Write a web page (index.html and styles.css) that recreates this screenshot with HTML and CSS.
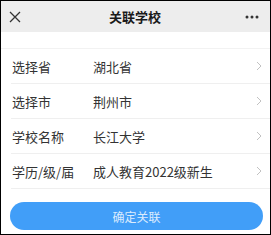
FILE: index.html
```html
<!DOCTYPE html>
<html lang="zh">
<head>
<meta charset="utf-8">
<link rel="stylesheet" href="styles.css">
</head>
<body>
<div class="page">
  <header class="nav">
    <svg class="nav-close" width="12" height="12" viewBox="0 0 12 12"><path d="M1 1L11 11M11 1L1 11" stroke="#333" stroke-width="1.3" fill="none"/></svg>
    <div class="nav-title">关联学校</div>
    <svg class="nav-more" width="14" height="4" viewBox="0 0 14 4"><circle cx="2" cy="2" r="1.5" fill="#333"/><circle cx="7" cy="2" r="1.5" fill="#333"/><circle cx="12" cy="2" r="1.5" fill="#333"/></svg>
  </header>
  <div class="spacer"></div>
  <ul class="list">
    <li class="row"><span class="label">选择省</span><span class="value">湖北省</span><svg class="chev" width="6" height="10" viewBox="0 0 6 10"><path d="M1 1L5 5L1 9" stroke="#c2c2c2" stroke-width="1" fill="none"/></svg></li>
    <li class="row"><span class="label">选择市</span><span class="value">荆州市</span><svg class="chev" width="6" height="10" viewBox="0 0 6 10"><path d="M1 1L5 5L1 9" stroke="#c2c2c2" stroke-width="1" fill="none"/></svg></li>
    <li class="row"><span class="label">学校名称</span><span class="value">长江大学</span><svg class="chev" width="6" height="10" viewBox="0 0 6 10"><path d="M1 1L5 5L1 9" stroke="#c2c2c2" stroke-width="1" fill="none"/></svg></li>
    <li class="row"><span class="label">学历/级/届</span><span class="value">成人教育2022级新生</span><svg class="chev" width="6" height="10" viewBox="0 0 6 10"><path d="M1 1L5 5L1 9" stroke="#c2c2c2" stroke-width="1" fill="none"/></svg></li>
  </ul>
  <div class="actions">
    <button class="btn">确定关联</button>
  </div>
</div>
</body>
</html>
```
FILE: styles.css
```css
* { box-sizing: border-box; }
html, body { margin: 0; padding: 0; background: #fff; }
body {
  font-family: "Noto Sans CJK SC", "Noto Sans", sans-serif;
}
.page {
  width: 271px;
  height: 235px;
  border: 1px solid #000;
  display: flex;
  flex-direction: column;
  overflow: hidden;
}
.nav {
  height: 31px;
  flex: none;
  background: #ededed;
  display: flex;
  align-items: center;
  justify-content: space-between;
  padding: 0 11px 0 8px;
}
.nav-close { display: block; }
.nav-title {
  font-size: 13px;
  font-weight: 700;
  color: #1a1a1a;
  line-height: 1;
  margin-left: 4px;
}
.nav-more { display: block; }
.spacer {
  height: 17px;
  flex: none;
  border-bottom: 1px solid #f2f2f2;
}
.list {
  list-style: none;
  margin: 0;
  padding: 0 0 0 10px;
}
.row {
  height: 35px;
  display: flex;
  align-items: center;
  border-bottom: 1px solid #efefef;
  font-size: 13px;
  color: #333;
  padding-right: 8px;
}
.label {
  width: 82px;
  flex: none;
  padding-left: 1px;
}
.value {
  flex: 1;
  color: #333;
}
.chev { display: block; flex: none; }
.actions {
  padding: 13px 7px 0 9px;
}
.btn {
  display: block;
  width: 100%;
  height: 28px;
  border: none;
  border-radius: 14px;
  background: #419ef8;
  color: rgba(255,255,255,0.82);
  font-family: "Noto Sans CJK SC", "Noto Sans", sans-serif;
  font-size: 12px;
  padding: 0;
}
```
